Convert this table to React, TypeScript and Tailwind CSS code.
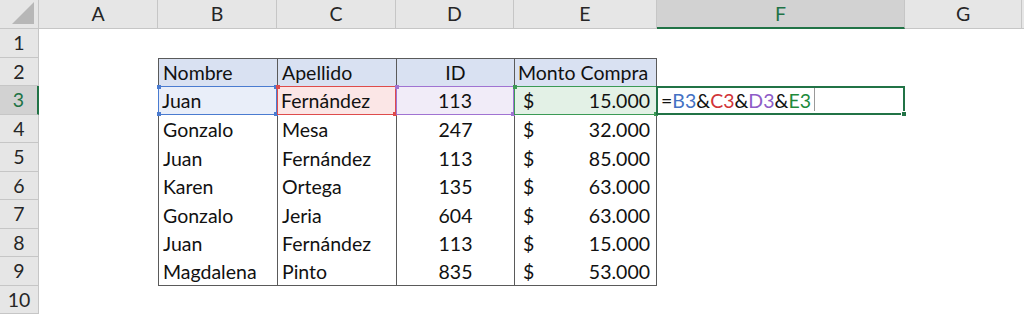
import React from "react";

const cols = ["A", "B", "C", "D", "E", "F", "G"];

const rows = [
  ["Gonzalo", "Mesa", "247", "32.000"],
  ["Juan", "Fernández", "113", "85.000"],
  ["Karen", "Ortega", "135", "63.000"],
  ["Gonzalo", "Jeria", "604", "63.000"],
  ["Juan", "Fernández", "113", "15.000"],
  ["Magdalena", "Pinto", "835", "53.000"],
];

const font = { fontFamily: "Lato, 'Open Sans', sans-serif" };

// tiny square handle drawn at the corners of the highlighted ranges
function Dot({ color, pos }: { color: string; pos: string }) {
  return <span className={`absolute w-[4px] h-[4px] ${color} ${pos}`} />;
}

export default function App() {
  return (
    <div
      className="w-[1024px] h-[316px] bg-white overflow-hidden text-[19.5px] leading-none text-[#111]"
      style={font}
    >
      <div className="grid grid-cols-[39px_119px_119px_119px_118px_143px_248px_117px_1fr] grid-rows-[29px_29px_28px_29px_28px_29px_28px_29px_28px_29px_28px]">
        {/* corner */}
        <div className="bg-[#e6e6e6] border-r border-b border-[#c6c6c6] relative">
          <span className="absolute right-[4px] bottom-[4px] w-0 h-0 border-l-[22px] border-l-transparent border-b-[22px] border-b-[#b7b7b7]" />
        </div>
        {cols.map((c) =>
          c === "F" ? (
            <div
              key={c}
              className="bg-[#d2d2d2] border-r border-[#c6c6c6] border-b-2 border-b-[#217346] text-[#217346] flex items-center justify-center pt-[1px]"
            >
              {c}
            </div>
          ) : (
            <div
              key={c}
              className="bg-[#e6e6e6] border-r border-b border-[#c6c6c6] text-[#262626] flex items-center justify-center"
            >
              {c}
            </div>
          )
        )}
        <div className="bg-[#e6e6e6] border-b border-[#c6c6c6]" />

        {/* row 1 */}
        <RowHead n={1} />
        <div className="col-span-8" />

        {/* row 2: table header */}
        <RowHead n={2} />
        <div />
        <div className="bg-[#d9e1f2] border-t border-l border-[#5a5a5a] flex items-end px-[4px] pb-[4px]">Nombre</div>
        <div className="bg-[#d9e1f2] border-t border-l border-[#5a5a5a] flex items-end px-[4px] pb-[4px]">Apellido</div>
        <div className="bg-[#d9e1f2] border-t border-l border-[#5a5a5a] flex items-end justify-center pb-[4px]">ID</div>
        <div className="bg-[#d9e1f2] border-t border-x border-[#5a5a5a] flex items-end px-[3px] pb-[4px]">Monto Compra</div>
        <div className="col-span-3" />

        {/* row 3: referenced cells */}
        <RowHead n={3} active />
        <div />
        <div className="relative bg-[#e9eef9] border border-[#4a7bd0] flex items-end px-[3px] pb-[4px]">
          Juan
          <Dot color="bg-[#4a7bd0]" pos="-left-[2px] -top-[2px]" />
          <Dot color="bg-[#4a7bd0]" pos="-right-[2px] -top-[2px]" />
          <Dot color="bg-[#4a7bd0]" pos="-left-[2px] -bottom-[2px]" />
          <Dot color="bg-[#4a7bd0]" pos="-right-[2px] -bottom-[2px]" />
        </div>
        <div className="relative bg-[#fbe6e6] border border-[#de4b4b] flex items-end px-[3px] pb-[4px]">
          Fernández
          <Dot color="bg-[#de4b4b]" pos="-left-[2px] -top-[2px]" />
          <Dot color="bg-[#de4b4b]" pos="-right-[2px] -bottom-[2px]" />
        </div>
        <div className="relative bg-[#f1ecf8] border border-[#a073d2] flex items-end justify-center pb-[4px]">
          113
          <Dot color="bg-[#a073d2]" pos="-left-[2px] -top-[2px]" />
          <Dot color="bg-[#a073d2]" pos="-right-[2px] -bottom-[2px]" />
        </div>
        <div className="relative bg-[#e3f1e6] border border-[#3b9a55] flex items-end justify-between pl-[8px] pr-[6px] pb-[4px]">
          <span>$</span>
          <span>15.000</span>
          <Dot color="bg-[#3b9a55]" pos="-left-[2px] -top-[2px]" />
          <Dot color="bg-[#3b9a55]" pos="-right-[2px] -bottom-[2px]" />
        </div>
        <div className="relative border-2 border-[#217346] flex items-end px-[3px] pb-[3px] -ml-[1px]">
          <span>=</span>
          <span className="text-[#4472c4]">B3</span>
          <span>&amp;</span>
          <span className="text-[#d13438]">C3</span>
          <span>&amp;</span>
          <span className="text-[#8e5cc7]">D3</span>
          <span>&amp;</span>
          <span className="text-[#1e8a3c]">E3</span>
          <span className="self-stretch ml-[3px] -mb-[1px] w-px bg-[#9a9a9a]" />
          <span className="absolute -right-[4px] -bottom-[4px] w-[6px] h-[6px] bg-[#217346] border border-white" />
        </div>
        <div className="col-span-2" />

        {/* rows 4-9 */}
        {rows.map((r, i) => {
          const last = i === rows.length - 1;
          const edge = last ? "border-b" : "";
          return (
            <React.Fragment key={i}>
              <RowHead n={i + 4} />
              <div />
              <div className={`border-l ${edge} border-[#5a5a5a] flex items-end px-[4px] pb-[4px]`}>{r[0]}</div>
              <div className={`border-l ${edge} border-[#5a5a5a] flex items-end px-[4px] pb-[4px]`}>{r[1]}</div>
              <div className={`border-l ${edge} border-[#5a5a5a] flex items-end justify-center pb-[4px]`}>{r[2]}</div>
              <div className={`border-x ${edge} border-[#5a5a5a] flex items-end justify-between pl-[8px] pr-[6px] pb-[4px]`}>
                <span>$</span>
                <span>{r[3]}</span>
              </div>
              <div className="col-span-3" />
            </React.Fragment>
          );
        })}

        {/* row 10 */}
        <RowHead n={10} />
        <div className="col-span-8" />
      </div>
    </div>
  );
}

function RowHead({ n, active }: { n: number; active?: boolean }) {
  if (active) {
    return (
      <div className="bg-[#d2d2d2] border-b border-[#c6c6c6] border-r-2 border-r-[#217346] text-[#217346] flex items-center justify-center">
        {n}
      </div>
    );
  }
  return (
    <div className="bg-[#e6e6e6] border-r border-b border-[#c6c6c6] text-[#262626] flex items-center justify-center">
      {n}
    </div>
  );
}
